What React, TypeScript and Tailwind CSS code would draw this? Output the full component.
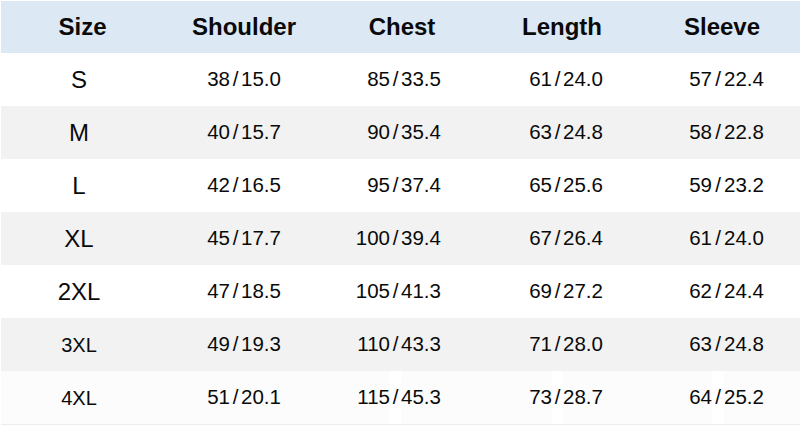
import React from "react";

type Row = { size: string; small?: boolean; v: [string, string][] };

const rows: Row[] = [
  { size: "S", v: [["38", "15.0"], ["85", "33.5"], ["61", "24.0"], ["57", "22.4"]] },
  { size: "M", v: [["40", "15.7"], ["90", "35.4"], ["63", "24.8"], ["58", "22.8"]] },
  { size: "L", v: [["42", "16.5"], ["95", "37.4"], ["65", "25.6"], ["59", "23.2"]] },
  { size: "XL", v: [["45", "17.7"], ["100", "39.4"], ["67", "26.4"], ["61", "24.0"]] },
  { size: "2XL", v: [["47", "18.5"], ["105", "41.3"], ["69", "27.2"], ["62", "24.4"]] },
  { size: "3XL", small: true, v: [["49", "19.3"], ["110", "43.3"], ["71", "28.0"], ["63", "24.8"]] },
  { size: "4XL", small: true, v: [["51", "20.1"], ["115", "45.3"], ["73", "28.7"], ["64", "25.2"]] },
];

const headers = ["Size", "Shoulder", "Chest", "Length", "Sleeve"];

export default function App() {
  return (
    <div
      className="w-[800px] h-[425px] bg-white text-[#0a0a0a] pl-px pt-px overflow-hidden"
      style={{ fontFamily: '"Liberation Sans", Arial, sans-serif' }}
    >
      <div className="grid grid-cols-[163px_160px_156px_164px_156px] h-[52px] bg-[#dde8f5] items-center">
        {headers.map((h) => (
          <div key={h} className="text-center font-bold text-[24px] leading-none">
            {h}
          </div>
        ))}
      </div>
      {rows.map((r, i) => {
        const last = i === rows.length - 1;
        const bg = i % 2 === 1 ? "bg-[#f2f2f2]" : last ? "bg-[#fcfcfc]" : "bg-white";
        return (
          <div
            key={r.size}
            className={`grid grid-cols-[156px_73px_11px_79px_70px_11px_79px_72px_11px_77px_72px_12px_76px] h-[53px] items-center text-[20.5px] leading-none ${bg}`}
          >
            <div className={`text-center ${r.small ? "text-[20px]" : "text-[24px]"}`}>{r.size}</div>
            {r.v.map(([cm, inch], k) => (
              <React.Fragment key={k}>
                <div className="text-right">{cm}</div>
                <div
                  className={`text-center h-full flex items-center justify-center ${
                    last && k > 0 ? "bg-white" : ""
                  }`}
                >
                  /
                </div>
                <div className="text-left">{inch}</div>
              </React.Fragment>
            ))}
          </div>
        );
      })}
      <div className="h-px bg-[#ececec]" />
    </div>
  );
}
